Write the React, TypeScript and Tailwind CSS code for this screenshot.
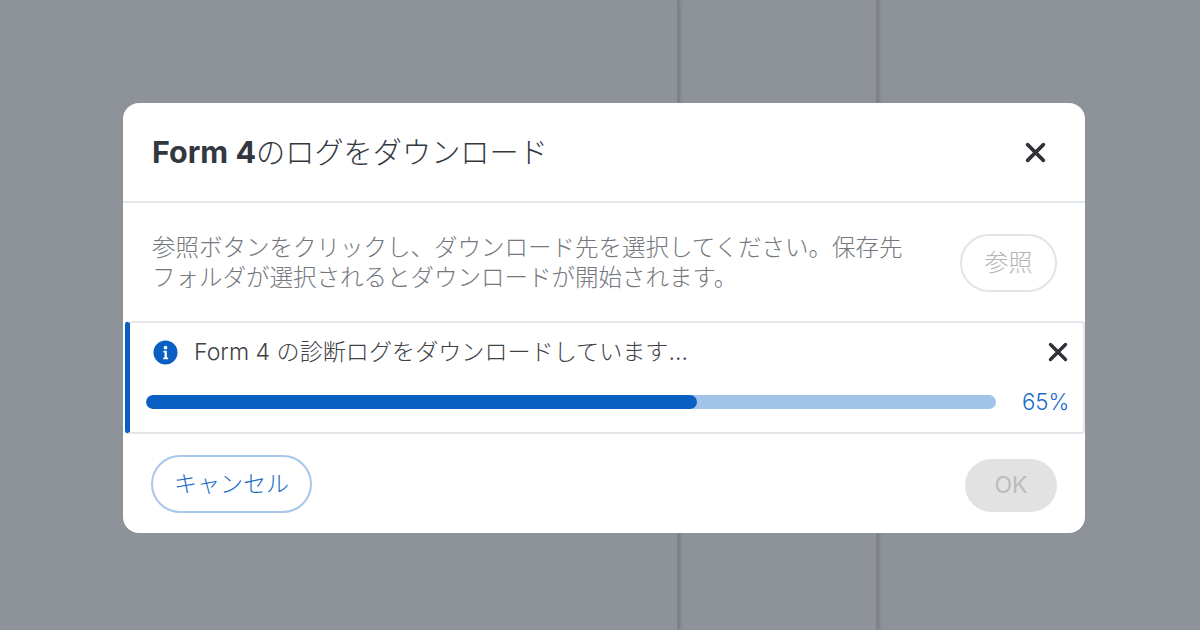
const font = "font-['Inter','Noto_Sans_CJK_JP',sans-serif]";

function CloseIcon({ className }: { className: string }) {
  return (
    <svg viewBox="0 0 20 20" className={className} fill="none" stroke="#2f3237" strokeWidth="3.4" strokeLinecap="round">
      <path d="M2.5 2.5 17.5 17.5M17.5 2.5 2.5 17.5" />
    </svg>
  );
}

function InfoIcon() {
  return (
    <svg viewBox="0 0 26 26" className="h-[25px] w-[25px] shrink-0">
      <circle cx="13" cy="13" r="12.5" fill="#0a60c2" />
      <circle cx="13" cy="8" r="1.9" fill="#fff" />
      <path d="M10.8 11.2h3.6v7h1.3v1.8H10.6v-1.8h1.4v-5.2h-1.2z" fill="#fff" />
    </svg>
  );
}

function Backdrop() {
  return (
    <div className="flex h-[630px] w-[1200px] bg-[#8e9399]">
      <div className="h-full w-[680px] border-r-[3px] border-[#7f8388] shadow-[1px_0_3px_#7f8388]" />
      <div className="h-full w-[199px] border-r-[3px] border-[#7f8388] shadow-[1px_0_3px_#7f8388]" />
      <div className="h-full flex-1" />
    </div>
  );
}

export default function App() {
  return (
    <div className={`relative h-[630px] w-[1200px] overflow-hidden ${font}`}>
      <Backdrop />
      <div className="absolute inset-0 pl-[123px] pt-[103px]">
        <div className="w-[962px] h-[430px] rounded-[16px] bg-white flex flex-col">
          <div className="flex h-[100px] items-center justify-between border-b-2 border-[#e3e7ea] pl-[29px] pr-[39px]">
            <h2 className="text-[29.2px] leading-[40px] font-light text-[#33383f]">
              <span className="text-[30.5px] font-bold">Form 4</span>のログをダウンロード
            </h2>
            <CloseIcon className="h-[21px] w-[21px]" />
          </div>

          <div className="flex h-[118px] items-start justify-between pl-[29px] pr-[28px] pt-[30px]">
            <p className="w-[770px] text-[23.5px] leading-[30px] font-light text-[#74787e]">
              参照ボタンをクリックし、ダウンロード先を選択してください。保存先
              <br />
              フォルダが選択されるとダウンロードが開始されます。
            </p>
            <button className="mt-[1px] flex h-[58px] w-[97px] items-center justify-center rounded-full border-2 border-[#e4e4e4] text-[24px] font-light text-[#b4b4b4]">
              参照
            </button>
          </div>

          <div className="ml-[2px] flex h-[113px] flex-col rounded-[4px] border-y-2 border-r-2 border-[#e4e6e8] border-l-[5px] border-l-[#0a60c2]">
            <div className="flex h-[58px] items-center pl-[23px] pr-[15px]">
              <InfoIcon />
              <span className="ml-[16px] flex-1 text-[23.1px] font-light text-[#3f4247]">
                Form 4 の診断ログをダウンロードしています...
              </span>
              <CloseIcon className="h-[20px] w-[20px]" />
            </div>
            <div className="flex items-center pl-[16px] pt-[9px]">
              <div className="h-[14px] w-[850px] overflow-hidden rounded-full bg-[#a3c4e9]">
                <div className="h-full w-[551px] rounded-full bg-[#0a60c2]" />
              </div>
              <span className="ml-[26px] text-[22.2px] leading-[24px] font-light text-[#1a6cc6]">65%</span>
            </div>
          </div>

          <div className="flex flex-1 items-center justify-between pl-[28px] pr-[28px] pt-[4px]">
            <button className="mb-[3px] flex h-[58px] w-[161px] items-center justify-center rounded-full border-2 border-[#a9c7ea] text-[23px] font-light text-[#1a6cc6]">
              キャンセル
            </button>
            <button className="flex h-[53px] w-[92px] items-center justify-center rounded-full bg-[#e2e2e2] text-[23px] text-[#bcbcbc]">
              OK
            </button>
          </div>
        </div>
      </div>
    </div>
  );
}
